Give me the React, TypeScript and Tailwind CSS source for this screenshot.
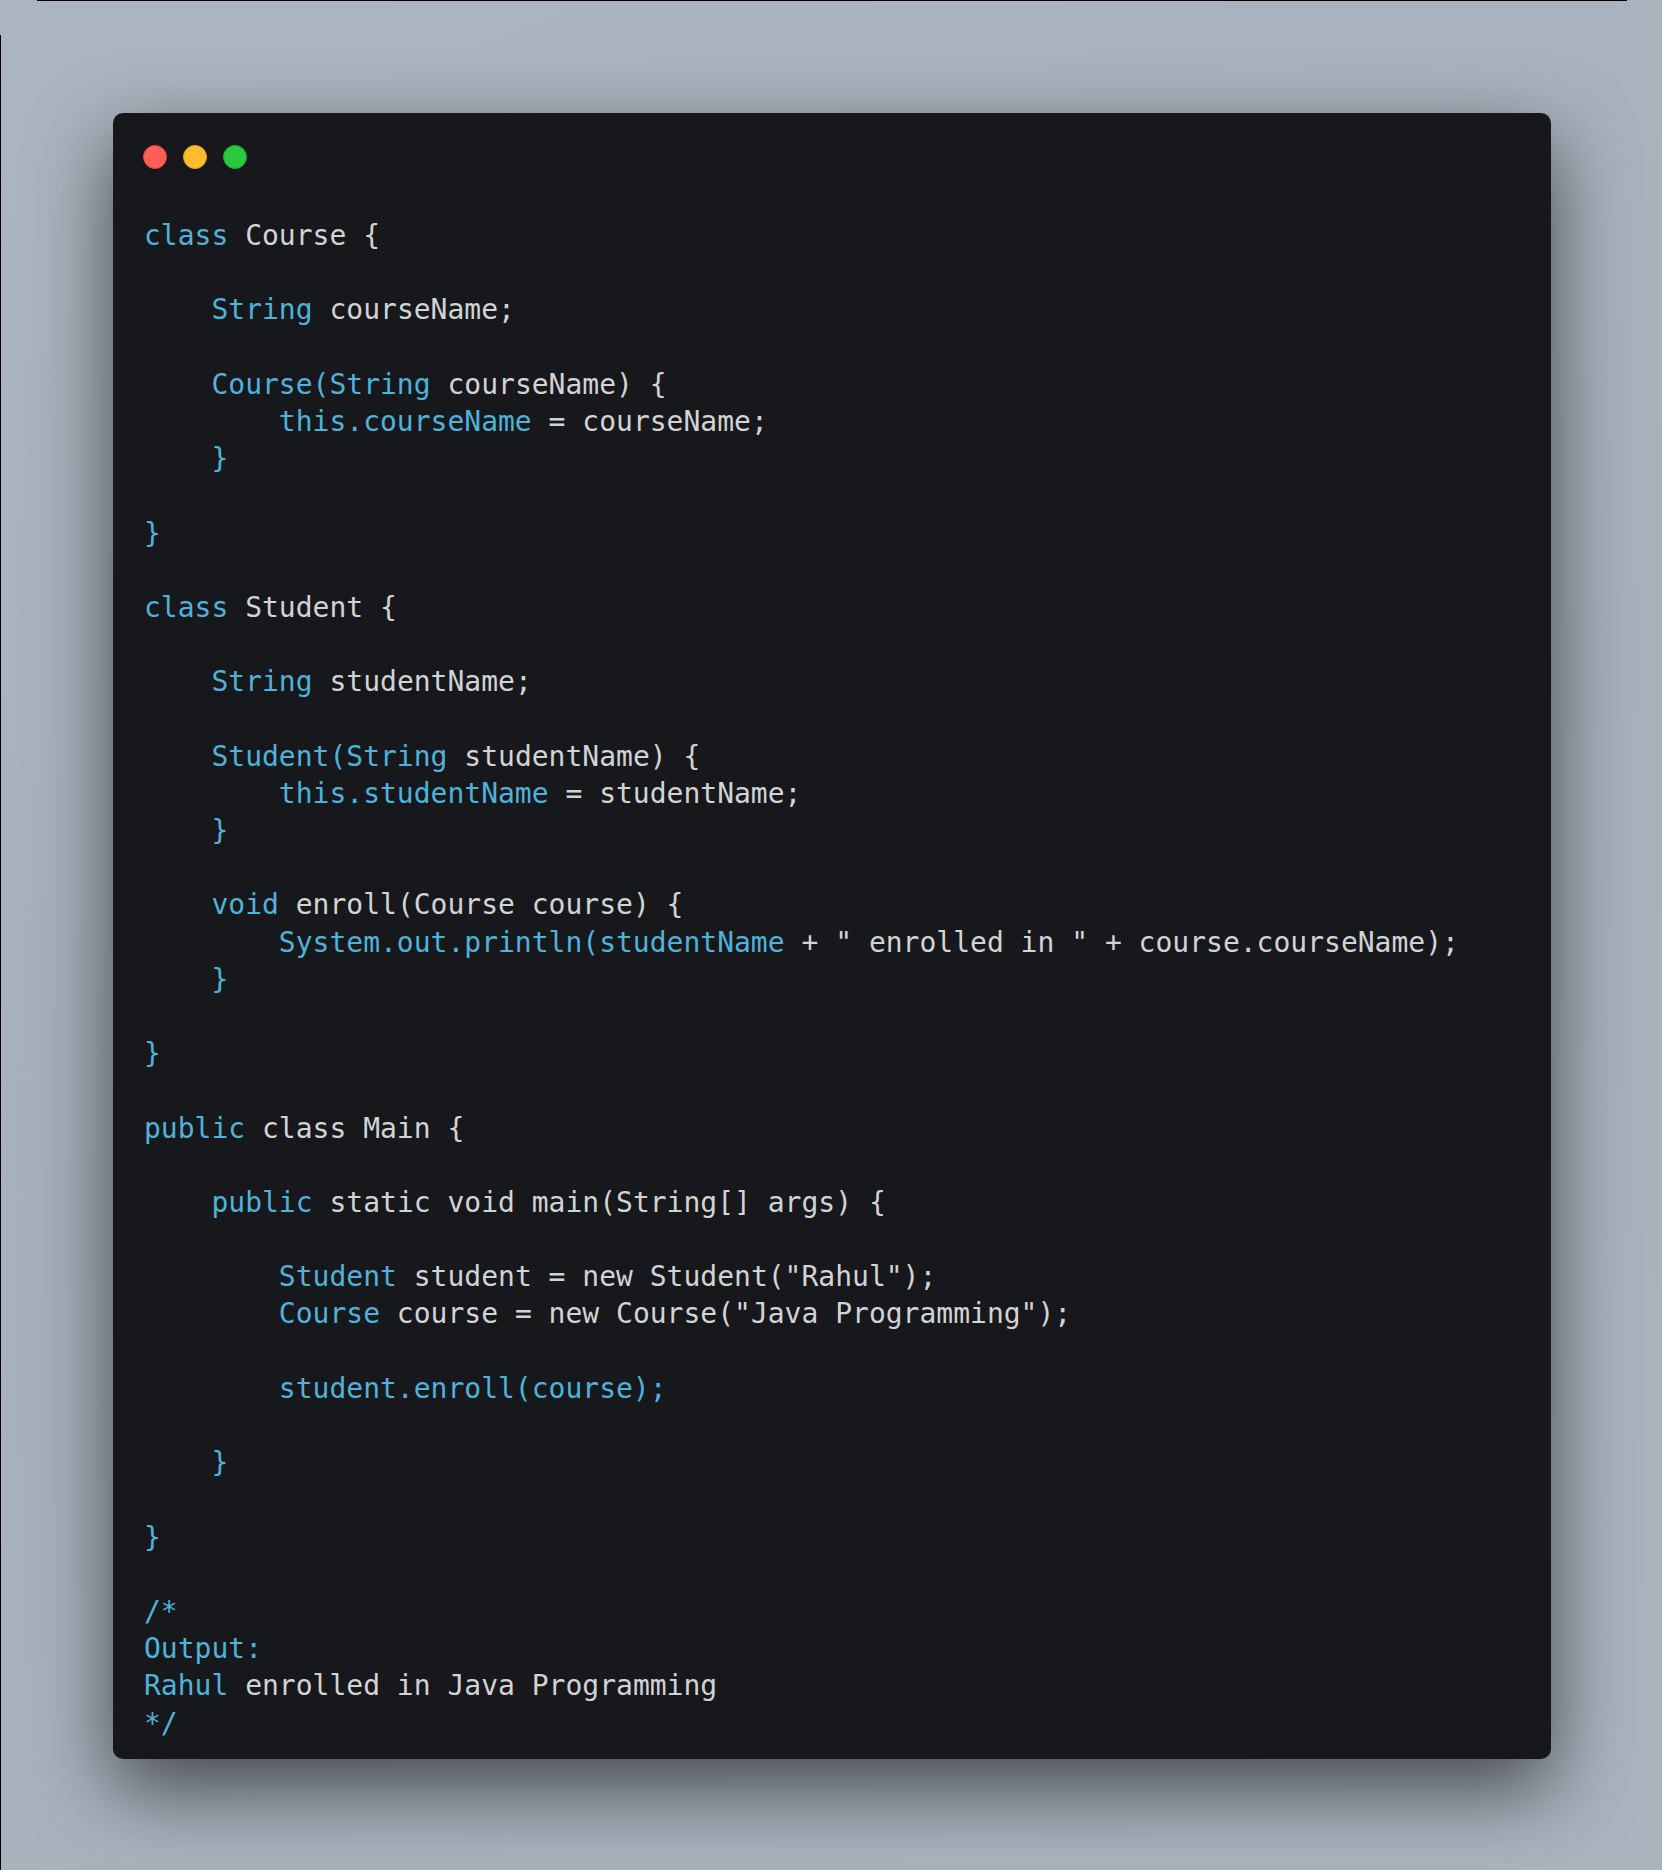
import React from "react";

const code = `class Course {

    String courseName;

    Course(String courseName) {
        this.courseName = courseName;
    }

}

class Student {

    String studentName;

    Student(String studentName) {
        this.studentName = studentName;
    }

    void enroll(Course course) {
        System.out.println(studentName + " enrolled in " + course.courseName);
    }

}

public class Main {

    public static void main(String[] args) {

        Student student = new Student("Rahul");
        Course course = new Course("Java Programming");

        student.enroll(course);

    }

}

/*
Output:
Rahul enrolled in Java Programming
*/`;

function Line({ text }: { text: string }) {
  const m = text.match(/^(\s*)(\S*)(.*)$/);
  if (!m || text.trim() === "") return <div className="h-[37.2px]">{"\u00a0"}</div>;
  return (
    <div className="h-[37.2px]">
      <span>{m[1]}</span>
      <span className="text-[#4fb2da]">{m[2]}</span>
      <span className="text-[#d2d3d4]">{m[3]}</span>
    </div>
  );
}

export default function App() {
  const lines = code.split("\n");
  return (
    <div className="relative min-h-[1870px] w-[1662px] bg-[#a8b3be] bg-[linear-gradient(160deg,#aab5bf_0%,#a6b1bc_50%,#a9b4bf_100%)] pt-[113px] pl-[113px]">
      <div className="absolute left-[37px] top-0 h-px w-[1590px] bg-black" />
      <div className="absolute left-0 top-[35px] bottom-0 w-px bg-black" />
      <div className="w-[1438px] rounded-[10px] bg-[#17181b] pt-8 pb-[17px] shadow-[0_30px_80px_rgba(0,0,0,0.6)]">
        <div className="flex gap-4 pl-[30px]">
          <div className="h-6 w-6 rounded-full border border-[#e0443e] bg-[#ff5f57]" />
          <div className="h-6 w-6 rounded-full border border-[#dea123] bg-[#febc2e]" />
          <div className="h-6 w-6 rounded-full border border-[#1aab29] bg-[#28c840]" />
        </div>
        <div
          className="mt-12 pl-[31px] whitespace-pre text-[28px] leading-[37.2px]"
          style={{ fontFamily: '"DejaVu Sans Mono", monospace' }}
        >
          {lines.map((l, i) => (
            <Line key={i} text={l} />
          ))}
        </div>
      </div>
    </div>
  );
}
